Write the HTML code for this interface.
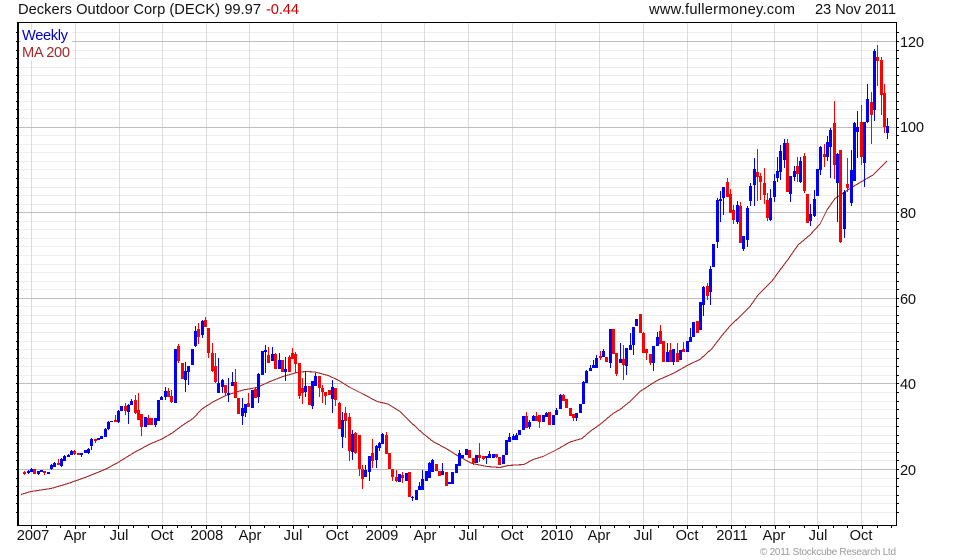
<!DOCTYPE html>
<html><head><meta charset="utf-8"><style>
html,body{margin:0;padding:0;background:#fff;width:980px;height:560px;overflow:hidden}
svg{display:block}
text{font-family:"Liberation Sans",Arial,sans-serif;font-size:14.67px;fill:#111}
</style></head><body>
<svg id="c" width="980" height="560" viewBox="0 0 980 560" xmlns="http://www.w3.org/2000/svg">
<g id="grid" shape-rendering="crispEdges" fill="none"></g>
<rect x="21" y="29" width="51" height="31" fill="#fff"/>
<path id="ma" fill="none" stroke="#a52a2a" stroke-width="1.1" shape-rendering="crispEdges" d="M21 494.5L31 491.5 51 488.5 68 483.5 85 477.5 105 469.5 118 462.5 135 452 151 443.5 162 439 173 432.5 183 425 193 418.5 202 409 212 402.5 227 395 243 390 257 387.5 270 381.5 283 376.5 297 372.5 306 371.5 315 372 328 375.5 338 380 350 387.5 363 394 377 401.5 388 404 400 411.5 410 421.5 423 433.5 433 441.5 447 449 458 456 472 463.5 487 466.5 500 467.5 508 465.5 524 464.5 533 459.5 543 456.5 557 449.5 570 442 582 438.5 590 431.5 600 424.5 613 413.5 620 409.5 630 401.5 640 391.5 657 380.5 673 373.5 690 364 700 359.5 712 348.5 722 335.5 730 326 742 314.5 750 306.5 758 295 772 281 780 270 788 259.5 798 245 810 235 820 224 827 210 835 198.5 850 188.5 860 182.5 873 175 880 168 887 161"/>
<g id="candles" shape-rendering="crispEdges"></g>
<path id="axes" shape-rendering="crispEdges" fill="none" stroke="#000"></path>
<text x="18" y="14" textLength="243">Deckers Outdoor Corp (DECK) 99.97</text>
<text x="266" y="14" textLength="33" style="fill:#c00">-0.44</text>
<text x="649" y="14" textLength="146">www.fullermoney.com</text>
<text x="815" y="14" textLength="81">23 Nov 2011</text>
<text x="22" y="40" textLength="46" style="fill:#00c">Weekly</text>
<text x="22" y="57" textLength="48" style="fill:#a52a2a">MA 200</text>
<text x="900" y="47" textLength="24">120</text>
<text x="900" y="132" textLength="24">100</text>
<text x="900" y="218" textLength="16">80</text>
<text x="900" y="304" textLength="16">60</text>
<text x="900" y="389" textLength="16">40</text>
<text x="900" y="475" textLength="16">20</text>
<g text-anchor="middle">
<text x="33" y="540">2007</text><text x="75" y="540">Apr</text><text x="119" y="540">Jul</text><text x="162" y="540">Oct</text>
<text x="207" y="540">2008</text><text x="250" y="540">Apr</text><text x="293" y="540">Jul</text><text x="337" y="540">Oct</text>
<text x="382" y="540">2009</text><text x="425" y="540">Apr</text><text x="468" y="540">Jul</text><text x="512" y="540">Oct</text>
<text x="557" y="540">2010</text><text x="599" y="540">Apr</text><text x="643" y="540">Jul</text><text x="687" y="540">Oct</text>
<text x="732" y="540">2011</text><text x="774" y="540">Apr</text><text x="818" y="540">Jul</text><text x="861" y="540">Oct</text>
</g>
<text x="760" y="555" textLength="136" style="font-size:10px;fill:#999">© 2011 Stockcube Research Ltd</text>
</svg>
<script>
var D=[[1,472,474,471,475],[0,471,473,470,474],[0,469,472,468,472],[1,469,474],[0,471,474,471,475],[0,470,472],[1,471,473,471,475],[0,472,474],[0,465,469,464,470],[0,463,467,462,467],
[1,463,465,459,465],[0,459,466,458,467],[0,456,461,455,461],[0,455,457,454,457],[0,451,455,450,455],[1,451,454,450,455],[1,453,455],[0,453,455,453,457],[0,450,453],[0,449,453,448,454],
[0,439,446,438,450],[1,439,441,439,443],[0,438,440],[0,436,439],[0,429,437,428,437],[0,422,429,421,430],[0,421,422],[1,420,422,415,422],[0,411,422,410,423],[0,406,411],
[1,406,411,403,415],[0,405,412,404,424],[0,401,405,399,405],[1,400,413,395,414],[1,410,420,393,420],[1,414,427,414,436],[0,417,427],[1,418,425,415,425],[1,418,425],[0,418,425,418,427],
[0,400,421],[0,397,400,396,400],[0,391,397,387,400],[1,391,397,388,397],[1,396,402,390,403],[0,349,403],[1,346,361,344,363],[1,363,379],[0,371,380,362,392],[0,366,372,366,385],
[0,349,365],[0,331,346,326,347],[1,329,337,323,344],[0,321,335,320,338],[1,320,327,317,327],[1,328,353,328,358],[1,353,371,343,372],[1,366,382,353,383],[0,383,393,358,393],[0,380,387,379,393],
[1,385,393,385,395],[0,393,395,378,402],[0,382,386,372,386],[1,382,398,369,398],[1,398,414],[0,408,416,398,425],[0,404,413,404,417],[1,403,407,393,407],[0,390,408],[1,389,398,387,398],
[0,374,397,373,403],[0,351,375],[0,350,352,345,373],[1,355,363,347,363],[0,354,361,347,361],[1,354,369,353,369],[0,360,369,353,369],[1,360,372],[0,369,372,357,381],[1,357,372,355,372],
[1,353,359,348,359],[1,354,364,352,373],[1,363,396,363,399],[1,388,393,378,404],[0,386,392,371,397],[1,386,405],[0,381,406,381,409],[0,376,386,373,386],[1,376,388,376,397],[1,388,392,385,403],
[1,392,396,392,405],[1,390,395],[0,387,399,380,413],[1,388,400,388,406],[1,403,429,402,429],[0,420,437,412,448],[1,413,421,407,438],[1,417,451,413,461],[0,434,452,430,460],[1,433,453,432,454],
[1,435,469,435,476],[1,469,479,465,489],[0,470,477,465,477],[0,456,472,456,481],[1,453,461,439,468],[0,446,460,445,468],[0,443,448,442,451],[0,434,444,433,444],[1,435,454,432,454],[1,453,469],
[1,469,477,469,481],[1,477,481,470,482],[0,474,482],[1,475,478,472,483],[0,473,481],[1,472,497],[0,497,498,496,501],[0,490,500],[0,486,490,482,490],[0,479,490,470,490],
[0,471,481],[0,463,478,462,478],[0,460,472,459,472],[1,464,471],[1,471,476],[0,471,475,463,475],[1,472,486],[0,482,484],[0,472,484],[0,464,473],
[0,453,466,450,466],[0,455,458],[0,449,455],[1,450,458],[1,458,463,458,465],[0,455,463],[1,455,458,443,462],[1,456,459,456,460],[0,456,458,456,464],[0,454,458,451,458],
[0,454,458],[1,454,457,454,458],[1,457,465],[0,455,464],[0,440,455],[0,437,442,433,442],[0,436,440,434,440],[0,435,440,433,440],[0,430,435],[0,416,430],
[1,416,428,412,428],[0,422,427,420,429],[0,416,421,415,421],[1,416,421,412,421],[1,415,422,415,428],[0,415,422],[0,413,417,412,417],[1,412,425],[0,415,425],[0,410,415,408,415],
[0,395,409,394,409],[1,395,401,394,401],[1,399,408],[1,408,416],[1,414,418,414,421],[0,413,418,413,421],[0,404,413],[0,382,404,381,404],[0,371,383,370,383],[0,368,371,365,371],
[0,365,368,360,368],[0,358,368,355,368],[1,356,358,351,360],[0,351,357,349,357],[1,357,362],[0,329,363,329,368],[1,329,354],[1,353,374,353,376],[0,359,363,343,363],[1,359,365,345,380],
[0,348,366,348,375],[0,345,350,333,350],[0,327,345,327,355],[0,319,326],[1,314,333],[1,333,353,332,353],[1,349,353,349,360],[1,354,363,354,365],[0,346,363,346,371],[0,337,346,332,346],
[1,331,344,325,344],[1,341,362],[0,352,362,343,362],[1,350,362,343,362],[0,349,362,349,365],[1,353,362,343,362],[0,350,360],[1,349,352,342,352],[0,341,352],[0,337,342,328,342],
[0,322,337],[1,321,333],[0,302,330],[0,287,305,286,316],[1,286,296,283,300],[0,269,292,266,305],[0,244,267],[0,200,242,198,248],[0,199,201,191,222],[0,187,198,187,215],
[1,182,197,178,197],[1,194,213,189,213],[1,210,220,205,224],[0,205,222,201,224],[1,206,243,202,243],[0,236,249,236,251],[0,208,240,206,247],[0,186,201,183,206],[0,169,185,158,206],[1,172,177,149,201],
[1,176,182,173,200],[1,183,195,168,204],[1,200,218,193,221],[0,198,220,189,221],[0,181,197,174,202],[0,171,178,157,182],[0,151,172,145,180],[0,143,160,139,168],[1,143,192,139,192],[0,176,194,176,202],
[0,171,177,166,181],[1,166,174,157,182],[0,161,182,157,183],[1,156,191,153,193],[1,194,223],[0,214,221,204,226],[0,199,216,190,217],[0,169,196],[0,147,170,146,175],[1,154,157,144,167],
[0,142,157,136,161],[0,130,147,128,178],[1,123,165,101,179],[0,154,183,153,222],[1,150,242,150,243],[0,192,229,190,238],[1,184,188,158,192],[0,170,203,150,206],[0,123,181,122,181],[0,127,132,111,158],
[1,122,157,105,165],[0,122,163,122,187],[0,99,122,84,123],[1,102,115,92,144],[0,51,110,49,121],[1,57,61,45,86],[1,60,95,57,115],[1,93,127,84,133],[0,126,133,118,139]];
var g=['',''],i,d,x;
for(i=0;i<D.length;i++){d=D[i];x=Math.round(24.3+3.345*i);
var h=d[3]===undefined?d[1]:d[3],l=d[4]===undefined?d[2]:d[4];
g[d[0]]+='M'+x+' '+h+'h1V'+l+'h-1zM'+(x-1)+' '+d[1]+'h3V'+d[2]+'h-3z';}
var s='<path fill="#00f" d="'+g[0]+'"/><path fill="#f00" d="'+g[1]+'"/>';
document.getElementById('candles').innerHTML=s;
var v=[31,75,119,162,206,249,293,337,381,424,468,512,555,599,643,687,731,774,817,861];
var mn='',mj='',vg='',ax='M18.5 22.5H896.5V525.5H18.5Z M17.5 22V526 ';
for(i=0;i<=55;i++){var y=Math.floor(41.5+i*8.56)+.5;
if(i%10==0){mj+='M19 '+y+'H896';}else{if(y<525)mn+='M19 '+y+'H896';}
if(y<525)ax+='M16 '+y+'H18M897 '+y+'H899';}
ax+='M16 32.5H18M897 32.5H899';mn+='M19 32.5H896';
for(i=0;i<v.length;i++){vg+='M'+(v[i]+.5)+' 23V525';}
for(i=0;i<62;i++){x=Math.round(31+i*14.58)+.5;if(x<896)ax+='M'+x+' 526V'+(i%3==0?529:528);}
document.getElementById('axes').setAttribute('d',ax);
document.getElementById('grid').innerHTML='<path stroke="#eeeeee" d="'+mn+'"/><path stroke="#dcdcdc" d="'+vg+'"/><path stroke="#bebebe" d="'+mj+'"/>';
</script>
</body></html>
